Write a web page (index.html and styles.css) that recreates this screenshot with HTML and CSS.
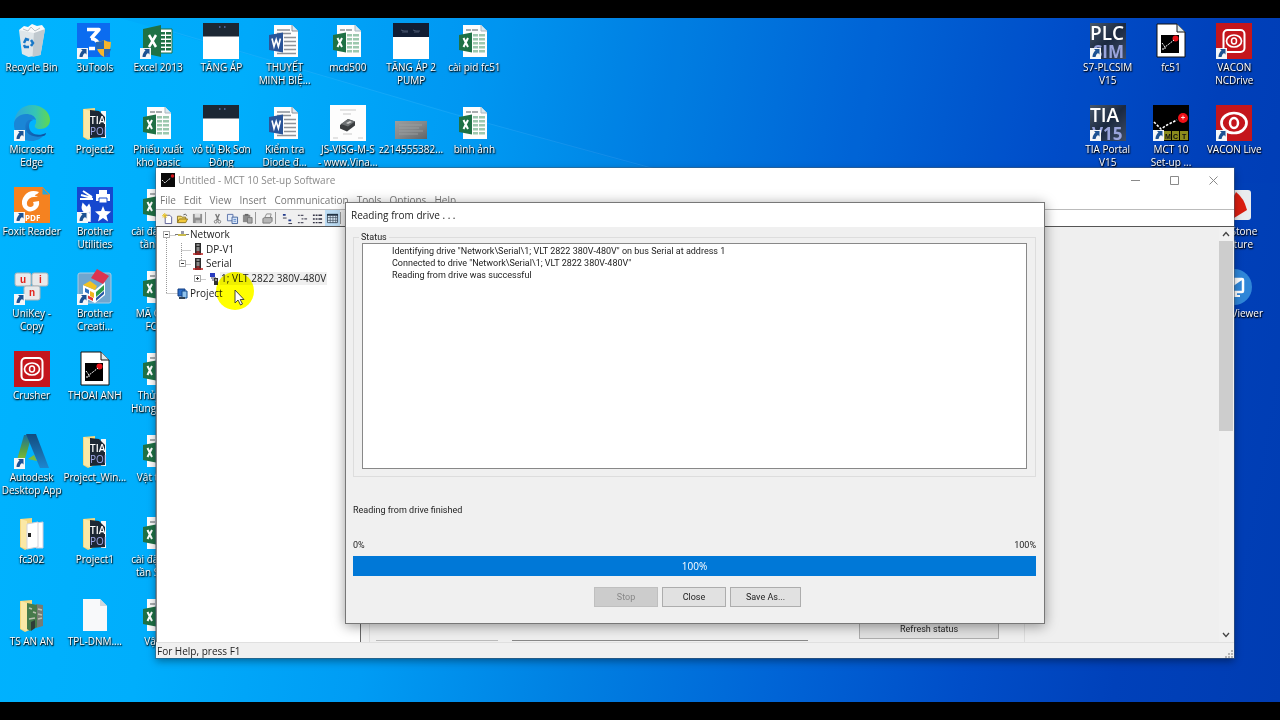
FILE: index.html
```html
<!DOCTYPE html>
<html lang="vi">
<head>
<meta charset="utf-8">
<title>Untitled - MCT 10 Set-up Software</title>
<link rel="stylesheet" href="styles.css">
</head>
<body>
<svg class="sprite" aria-hidden="true">
  <defs>
    <linearGradient id="gEdge" x1="0" y1="0" x2="1" y2="0"><stop offset="0" stop-color="#2aa6e0"/><stop offset=".6" stop-color="#35c5b4"/><stop offset="1" stop-color="#62d84e"/></linearGradient>
    <linearGradient id="gEdge2" x1="0" y1="0" x2="1" y2="1"><stop offset="0" stop-color="#1b7fd4"/><stop offset="1" stop-color="#0c4f9c"/></linearGradient>
    <linearGradient id="gTia" x1="0" y1="0" x2="1" y2="1"><stop offset="0" stop-color="#49586a"/><stop offset=".5" stop-color="#1b2940"/><stop offset="1" stop-color="#3f4d66"/></linearGradient>
    <linearGradient id="gAdA" x1="0" y1="0" x2="0" y2="1"><stop offset="0" stop-color="#1c6f9c"/><stop offset=".5" stop-color="#5aa343"/><stop offset="1" stop-color="#a2cf2e"/></linearGradient>
    <linearGradient id="gAdB" x1="0" y1="0" x2="0" y2="1"><stop offset="0" stop-color="#134c7e"/><stop offset="1" stop-color="#1d86cf"/></linearGradient>
    <linearGradient id="gMetal" x1="0" y1="0" x2="1" y2="1"><stop offset="0" stop-color="#9a9d9e"/><stop offset=".5" stop-color="#85888a"/><stop offset="1" stop-color="#606365"/></linearGradient>
  </defs>
  <symbol id="arrow" viewBox="0 0 36 36">
    <path d="M0 25h11v11H0z" fill="#f4f6f8"/><path d="M2.500 34q0-4 3-6.500l-1.500-1.500h5.500v5.500l-1.500-1.500q-2 1-2.500 4z" fill="#1d5293"/>
  </symbol>
  <symbol id="bin" viewBox="0 0 36 36">
    <path d="M5 7l26-1-4.500 26-12 2-6.500-3z" fill="#dfe6ea"/><path d="M20 9l11-3-4.500 26-8 2z" fill="#c0c9cf"/>
    <path d="M5 7l5-4 4 1 4-3 5 2 5-1 3 4-11 4z" fill="#f7f9fa"/><path d="M9 6l5 2 3-4 4 4 5-3" fill="none" stroke="#b7c0c6"/>
    <path d="M10 20l2-4 3 1M17 17l2 3-2 3M15 24h-4l-1-2" fill="none" stroke="#1878c8" stroke-width="2.500"/>
  </symbol>
  <symbol id="tools3u" viewBox="0 0 36 36">
    <path d="M0 0h33v34H0z" fill="#0b6cf0"/><path d="M10 6.500h12l-8 9" fill="none" stroke="#fff" stroke-width="3.500" stroke-linejoin="round"/><path d="M14 15.500q4 0 7 4M12 25.500h6" fill="none" stroke="#fff" stroke-width="3.500"/>
    <path d="M27 17q3 2 7 2 0 11-7 15-8-4-8-15 5 0 8-2z" fill="#f5b62c"/><path d="M27 17q-3 2-8 2v7h8zM27 26h7q-1 5-7 8z" fill="#2769b5"/>
  </symbol>
  <symbol id="excelapp" viewBox="0 0 36 36">
    <path d="M18 6h14v24H18z" fill="#fff" stroke="#1f7145"/><path d="M20 9h5v2.500h-5zm6 0h5v2.500h-5zM20 13h5v2.500h-5zm6 0h5v2.500h-5zM20 17h5v2.500h-5zm6 0h5v2.500h-5zM20 21h5v2.500h-5zm6 0h5v2.500h-5zM20 25h5v2.500h-5zm6 0h5v2.500h-5z" fill="#1f7145"/>
    <path d="M3 6l18-4v32L3 30z" fill="#1f7145"/><path d="M9 12l7 12M16 12L9 24" stroke="#fff" stroke-width="2.500"/>
  </symbol>
  <symbol id="xls" viewBox="0 0 36 36">
    <path d="M7 2h18l6 6v26H7z" fill="#fdfdfd"/><path d="M25 2v6h6" fill="#d8e6ee" stroke="#aab8bf"/>
    <path d="M10 6h5v2h-5zm6 0h6v2h-6z" fill="#a9aeb0"/><path d="M17 11h5v2.500h-5zm6 0h6v2.500h-6zM17 15h5v2.500h-5zm6 0h6v2.500h-6zM17 19h5v2.500h-5zm6 0h6v2.500h-6zM17 23h5v2.500h-5zm6 0h6v2.500h-6zM17 27h5v2.500h-5zm6 0h6v2.500h-6z" fill="#9cc8ae"/>
    <path d="M3 12l13-2.500v20L3 27z" fill="#1f7145"/><path d="M7.500 15l4.500 9M12 15l-4.500 9" stroke="#fff" stroke-width="2"/>
  </symbol>
  <symbol id="doc" viewBox="0 0 36 36">
    <path d="M7 2h18l6 6v26H7z" fill="#fdfdfd"/><path d="M25 2v6h6" fill="#e0e6ee" stroke="#8d9299"/>
    <path d="M10 7h13M10 10.500h14M17 14.500h12M17 18.500h12M17 22.500h12M17 26.500h12M10 30.500h19" stroke="#8d9299" stroke-width="1.300"/>
    <path d="M2 12l14-2.500v20L2 27z" fill="#2a5599"/><path d="M5 15.500l2 8 2.200-7 2.200 7 2-8" fill="none" stroke="#fff" stroke-width="1.600"/>
  </symbol>
  <symbol id="panelpic" viewBox="0 0 36 36"><path d="M0 0h36v36H0z" fill="#fff"/><path d="M0 0h36v13.500H0z" fill="#1c2734"/><path d="M16 4h1.500M21 4h1.500" stroke="#7a9cf0"/></symbol>
  <symbol id="pumppic" viewBox="0 0 36 36"><path d="M0 0h36v36H0z" fill="#fff"/><path d="M0 0h36v14H0z" fill="#111d34"/><path d="M8 7l3 1h4M20 7l3 1h4M9 9h6M21 9h5" fill="none" stroke="#54617a" stroke-width=".8"/></symbol>
  <symbol id="scan" viewBox="0 0 36 36"><path d="M0 0h36v36H0z" fill="#fdfdfd"/><path d="M10 5h16M13 9h8M13 29h9M3 33h5M28 33h5" stroke="#bbb" stroke-width=".8"/><path d="M10 20l8-6 7 2.500v4l-8 6-7-3z" fill="#3a3d3f"/><path d="M11 19l7-5 7 2.500-7 5z" fill="#6c7072"/><path d="M16 18l4-2 2 1-4 2z" fill="#ccc"/></symbol>
  <symbol id="plate" viewBox="0 0 36 36"><path d="M2 16h32v18H2z" fill="url(#gMetal)"/><path d="M6 20h23M6 23h20M6 26h24M6 29h19" stroke="#a0a3a4" stroke-width=".8"/></symbol>
  <symbol id="edge" viewBox="0 0 36 36">
    <path d="M0 18C1 6 9 0 18 0c10 0 18 7 18 15 0 6-5 9-10 9-4 0-6-2-5-4 3-4 0-10-7-10C7 10 1 13 0 18z" fill="url(#gEdge)"/>
    <path d="M0 18c1-5 6-9 12-9 5 0 9 2 10 6-6-2-10 3-9 8 1 6 8 10 18 6C27 34 22 36 18 36 8 36-1 29 0 18z" fill="#1a86d6"/>
    <path d="M12 18c-3 8 4 16 17 13 2 0 3-2 3-3-8 4-17 1-17-7 0-3 1-5 4-6-3-1-6 0-7 3z" fill="url(#gEdge2)"/>
  </symbol>
  <symbol id="folder" viewBox="0 0 36 36"><path d="M6 4l12-1v29l-7 3-5-3z" fill="#f4d77e"/><path d="M7 4l6 2v28l-6-2z" fill="#fbe8a6"/></symbol>
  <symbol id="tiafolder" viewBox="0 0 36 36"><use href="#folder"/><path d="M24 6h5v27h-5z" fill="#f6f6f6"/><path d="M13 5l9 1 6 6v20l-15 1z" fill="#1d2734"/></symbol>
  <symbol id="fcfolder" viewBox="0 0 36 36"><use href="#folder"/><path d="M22 8l7-1v26h-7z" fill="#fff" stroke="#ccd"/><path d="M13 9l11-2v25l-11 2z" fill="#fff" stroke="#d2d2d8"/><path d="M14 18h3v4h-3z" fill="#222"/></symbol>
  <symbol id="tsfolder" viewBox="0 0 36 36"><use href="#folder"/><path d="M22 7l7 1v21l-7 2z" fill="#777c74"/><path d="M13 6l10 2v22l-7 4-3-2z" fill="#467a4b"/><path d="M15 11l3 1M19 15l3 1M15 22l6-1M24 12l4 1M24 17l4 1M24 22l4-1" stroke="#b9c2b0" stroke-width="1.500"/><path d="M17 25l4-2v8l-4 3z" fill="#2f3d38"/></symbol>
  <symbol id="foxit" viewBox="0 0 36 36"><path d="M0 0h28l8 8v28H0z" fill="#f58220"/><path d="M28 0v8h8z" fill="#2ba6d8" stroke="#f58220"/><path d="M25 5q-9-3-14 3-5 6-2 12 5 7 12 3 5-3 4-9l-6 1q2 4-2 5-5 0-4-5 2-5 7-5 3 0 4-1-4 0-3-1 3-1 4-3z" fill="#fff"/></symbol>
  <symbol id="brother" viewBox="0 0 36 36"><path d="M0 0h36v36H0z" fill="#1648cf"/><path d="M3 12h13M4 8l11 3M6 4l9 6" stroke="#fff" stroke-width="2"/><path d="M22 3h8v4h-8zM19 7h14v7H19z" fill="#fff"/><path d="M22 11h8v5h-8z" fill="#fff" stroke="#1648cf"/><path d="M6 17l4 4 2-3q2 4-1 7l2 9h-3l-2-9q-4-2-2-8zM13 20v13" stroke="#fff" stroke-width="1.500" fill="#fff"/><path d="M26 19l2 5 6 .5-4.500 4 1.500 6-5-3.500-5 3.500 1.500-6-4.500-4 6-.5z" fill="#fff"/></symbol>
  <symbol id="unikey" viewBox="0 0 36 36"><g fill="#e8e9eb" stroke="#aeb3b7"><rect x="1" y="4" width="16" height="13" rx="2"/><rect x="18" y="4" width="16" height="13" rx="2"/><rect x="10" y="17" width="16" height="14" rx="2"/></g></symbol>
  <symbol id="creative" viewBox="0 0 36 36"><rect x="1" y="4" width="33" height="30" rx="2" fill="#6fa6cf" stroke="#a9cbe4"/><path d="M6 16l12 5v13L6 28z" fill="#fff"/><path d="M18 21l10-8v13l-10 8z" fill="#fff"/><path d="M8 19l4 2v4l-4-2z" fill="#2d6fc0"/><path d="M13 22l4 2v5l-4-2z" fill="#f0b51e"/><path d="M8 25l8 4v3l-8-4z" fill="#d33"/><path d="M19 23l8-7v5l-8 7z" fill="#2d9e48"/><path d="M19 29l8-7v3l-8 7z" fill="#2558a8"/><path d="M6 16l7-4 7 5-2 4z" fill="#f3c221"/><path d="M20 0l12 7-6 8-12-6z" fill="#dd3450"/></symbol>
  <symbol id="vacon" viewBox="0 0 36 36"><path d="M0 0h36v36H0z" fill="#c4161c"/><rect x="7.500" y="7" width="21" height="22" rx="4" fill="none" stroke="#fff" stroke-width="2"/><ellipse cx="18" cy="18" rx="7.500" ry="6" fill="none" stroke="#fff" stroke-width="1.700"/><ellipse cx="18" cy="18" rx="2.500" ry="3" fill="none" stroke="#fff" stroke-width="1.500"/></symbol>
  <symbol id="vaconlive" viewBox="0 0 36 36"><path d="M0 0h36v36H0z" fill="#c4161c"/><ellipse cx="18" cy="18" rx="12.500" ry="10" fill="none" stroke="#fff" stroke-width="2.700"/><ellipse cx="18" cy="18" rx="4" ry="5" fill="none" stroke="#fff" stroke-width="2.500"/></symbol>
  <symbol id="mctfile" viewBox="0 0 36 36"><path d="M4 1h20l8 8v25H4z" fill="#fff" stroke="#111"/><path d="M24 1v8h8" fill="#dce8ec" stroke="#111"/><path d="M8 12h18v18H8z" fill="#000"/><circle cx="22.500" cy="15.500" r="3" fill="#e8121a"/><path d="M9 20l3 4 4-3 5-4M12 24v3M9 26h2" fill="none" stroke="#fff" stroke-dasharray="2 1"/></symbol>
  <symbol id="mct" viewBox="0 0 36 36"><path d="M0 0h36v36H0z" fill="#000"/><circle cx="30" cy="13" r="5" fill="#f01018"/><path d="M30 10.500v4M28 12.500h4" stroke="#fff" stroke-width=".8"/><path d="M1 17l7 7 6-4 10-5" fill="none" stroke="#fff" stroke-width="1.600" stroke-dasharray="2.500 1.500"/><path d="M11 26h7v9h-7zM19 26h7v9h-7zM27 26h8v9h-8z" fill="#8b8b1c"/></symbol>
  <symbol id="autodesk" viewBox="0 0 36 36"><path d="M10 2h8l-8 27-9 5z" fill="url(#gAdA)"/><path d="M12 1h10l13 34H26z" fill="url(#gAdB)"/><path d="M14 26l6-4 3 6z" fill="#7dbb3c"/></symbol>
  <symbol id="blank" viewBox="0 0 36 36"><path d="M6 2h17l7 7v25H6z" fill="#f8f9fa"/><path d="M23 2v7h7z" fill="#cfd6dc"/></symbol>
  <symbol id="tiabg" viewBox="0 0 36 36"><path d="M0 0h36v36H0z" fill="url(#gTia)"/></symbol>
  <symbol id="faststone" viewBox="0 0 36 36"><rect x="1" y="3" width="34" height="30" rx="3" fill="#e9ecee"/><path d="M8 28L20 5q8 6 11 18l-13 8z" fill="#d91e10"/></symbol>
  <symbol id="teamviewer" viewBox="0 0 36 36"><circle cx="18" cy="18" r="18" fill="#2f86d8"/><rect x="8" y="10" width="19" height="13" rx="1" fill="none" stroke="#fff" stroke-width="2.500"/><path d="M10 22L26 11H10z" fill="#fff"/><path d="M16 24h5v3h-5z M14 26h10v2H14z" fill="#fff"/></symbol>
  <symbol id="drv" viewBox="0 0 14 12"><path d="M4 0h6v12H4z" fill="#2b2b2b"/><path d="M5.500 2h3M5.500 5h3M5.500 7h3" stroke="#e8e8e8"/><path d="M2 11h10" stroke="#b22" stroke-width="1.500"/><path d="M5.500 9h3" stroke="#d33"/></symbol>
</svg>

<main class="desktop">
  <svg class="beams" viewBox="0 0 1280 684" preserveAspectRatio="none" aria-hidden="true">
    <path d="M120 0L700 165H1280V0z" fill="#003cc8" opacity=".04"/>
    <path d="M160 10L450 95L670 155" fill="none" stroke="#8fd0ff" opacity=".13"/>
  </svg>

  <nav class="icons icons-left" aria-label="Desktop">
    <div class="col">
      <a class="tile" href="#"><svg><use href="#bin"/></svg><span>Recycle Bin</span></a>
      <a class="tile" href="#"><svg><use href="#edge"/><use href="#arrow"/></svg><span>Microsoft<br>Edge</span></a>
      <a class="tile" href="#"><svg><use href="#foxit"/><text class="pdf" x="11" y="34">PDF</text><use href="#arrow"/></svg><span>Foxit Reader</span></a>
      <a class="tile" href="#"><svg><use href="#unikey"/><g class="keys"><text x="6" y="14">u</text><text x="25" y="14">i</text><text x="15" y="27">n</text></g><use href="#arrow"/></svg><span>UniKey -<br>Copy</span></a>
      <a class="tile" href="#"><svg><use href="#vacon"/></svg><span>Crusher</span></a>
      <a class="tile" href="#"><svg><use href="#autodesk"/><use href="#arrow"/></svg><span>Autodesk<br>Desktop App</span></a>
      <a class="tile" href="#"><svg><use href="#fcfolder"/></svg><span>fc302</span></a>
      <a class="tile" href="#"><svg><use href="#tsfolder"/></svg><span>TS AN AN</span></a>
    </div>
    <div class="col">
      <a class="tile" href="#"><svg><use href="#tools3u"/><use href="#arrow"/></svg><span>3uTools</span></a>
      <a class="tile" href="#"><svg><use href="#tiafolder"/><text class="tf" x="13" y="19">TIA</text><text class="tf low" x="13" y="30">POI</text></svg><span>Project2</span></a>
      <a class="tile" href="#"><svg><use href="#brother"/><use href="#arrow"/></svg><span>Brother<br>Utilities</span></a>
      <a class="tile" href="#"><svg><use href="#creative"/><use href="#arrow"/></svg><span>Brother<br>Creati...</span></a>
      <a class="tile" href="#"><svg><use href="#mctfile"/></svg><span>THOAI ANH</span></a>
      <a class="tile" href="#"><svg><use href="#tiafolder"/><text class="tf" x="13" y="19">TIA</text><text class="tf low" x="13" y="30">POI</text></svg><span>Project_Win...</span></a>
      <a class="tile" href="#"><svg><use href="#tiafolder"/><text class="tf" x="13" y="19">TIA</text><text class="tf low" x="13" y="30">POI</text></svg><span>Project1</span></a>
      <a class="tile" href="#"><svg><use href="#blank"/></svg><span>TPL-DNM....</span></a>
    </div>
    <div class="col">
      <a class="tile" href="#"><svg><use href="#excelapp"/><use href="#arrow"/></svg><span>Excel 2013</span></a>
      <a class="tile" href="#"><svg><use href="#xls"/></svg><span>Phiếu xuất<br>kho basic</span></a>
      <a class="tile" href="#"><svg><use href="#xls"/></svg><span>cài đặt biến<br>tần số...</span></a>
      <a class="tile" href="#"><svg><use href="#xls"/></svg><span>MÃ CODE<br>FC 51</span></a>
      <a class="tile" href="#"><svg><use href="#xls"/></svg><span>Thủy Hải<br>Hùng Vươ...</span></a>
      <a class="tile" href="#"><svg><use href="#xls"/></svg><span>Vật tư A1</span></a>
      <a class="tile" href="#"><svg><use href="#xls"/></svg><span>cài đặt biến<br>tần SHZ...</span></a>
      <a class="tile" href="#"><svg><use href="#xls"/></svg><span>Vật tư</span></a>
    </div>
    <div class="col">
      <a class="tile" href="#"><svg><use href="#panelpic"/></svg><span>TĂNG ÁP</span></a>
      <a class="tile" href="#"><svg><use href="#panelpic"/></svg><span>vỏ tủ Đk Sơn<br>Đông</span></a>
    </div>
    <div class="col">
      <a class="tile" href="#"><svg><use href="#doc"/></svg><span>THUYẾT<br>MINH BIỆ...</span></a>
      <a class="tile" href="#"><svg><use href="#doc"/></svg><span>Kiểm tra<br>Diode đ...</span></a>
    </div>
    <div class="col">
      <a class="tile" href="#"><svg><use href="#xls"/></svg><span>mcd500</span></a>
      <a class="tile" href="#"><svg><use href="#scan"/></svg><span>JS-VISG-M-S<br>- www.Vina...</span></a>
    </div>
    <div class="col">
      <a class="tile" href="#"><svg><use href="#pumppic"/></svg><span>TĂNG ÁP 2<br>PUMP</span></a>
      <a class="tile" href="#"><svg><use href="#plate"/></svg><span>z214555382...</span></a>
    </div>
    <div class="col">
      <a class="tile" href="#"><svg><use href="#xls"/></svg><span>cài pid fc51</span></a>
      <a class="tile" href="#"><svg><use href="#xls"/></svg><span>bình ảnh</span></a>
    </div>
  </nav>

  <nav class="icons icons-right" aria-label="Desktop, right side">
    <div class="col">
      <a class="tile" href="#"><svg><use href="#tiabg"/><text class="big" x="0" y="17">PLC</text><text class="big low" x="3" y="35">SIM</text><use href="#arrow"/></svg><span>S7-PLCSIM<br>V15</span></a>
      <a class="tile" href="#"><svg><use href="#tiabg"/><text class="big" x="0" y="17">TIA</text><text class="big low" x="2" y="35">V15</text><use href="#arrow"/></svg><span>TIA Portal<br>V15</span></a>
    </div>
    <div class="col">
      <a class="tile" href="#"><svg><use href="#mctfile"/></svg><span>fc51</span></a>
      <a class="tile" href="#"><svg><use href="#mct"/><text class="tiles" x="12" y="34">M</text><text class="tiles" x="20" y="34">C</text><text class="tiles" x="29" y="34">T</text><use href="#arrow"/></svg><span>MCT 10<br>Set-up ...</span></a>
    </div>
    <div class="col">
      <a class="tile" href="#"><svg><use href="#vacon"/><use href="#arrow"/></svg><span>VACON<br>NCDrive</span></a>
      <a class="tile" href="#"><svg><use href="#vaconlive"/><use href="#arrow"/></svg><span>VACON Live</span></a>
      <a class="tile" href="#"><svg><use href="#faststone"/></svg><span>FastStone<br>Capture</span></a>
      <a class="tile" href="#"><svg><use href="#teamviewer"/></svg><span>TeamViewer</span></a>
    </div>
  </nav>

  <section class="window">
    <header class="titlebar">
      <svg class="app-icon" viewBox="0 0 14 14"><path d="M0 0h14v14H0z" fill="#0a0a0a"/><circle cx="11.500" cy="3" r="1.800" fill="#d4141c"/><path d="M1 7l3 3 3-3 3-2" fill="none" stroke="#eee" stroke-dasharray="2 1"/></svg>
      <h1>Untitled - MCT 10 Set-up Software</h1>
      <button type="button" class="caption" aria-label="Minimize"><svg viewBox="0 0 9 9"><path d="M0 4.500h9"/></svg></button>
      <button type="button" class="caption" aria-label="Maximize"><svg viewBox="0 0 9 9"><path d="M.5.500h8v8h-8z"/></svg></button>
      <button type="button" class="caption" aria-label="Close window"><svg viewBox="0 0 9 9"><path d="M.5.500l8 8M8.500.500l-8 8"/></svg></button>
    </header>
    <div class="menubar">
      <button type="button">File</button><button type="button">Edit</button><button type="button">View</button><button type="button">Insert</button><button type="button">Communication</button><button type="button">Tools</button><button type="button">Options</button><button type="button">Help</button>
    </div>
    <div class="toolbar">
      <div class="toolgroup">
        <button type="button" aria-label="New"><svg viewBox="0 0 12 12"><path d="M3.500 2.500h5l2 2v7h-7z" fill="#fff" stroke="#555a90"/><path d="M3 0v6M0 3h6M1 1l4 4M5 1L1 5" stroke="#e8c21a"/></svg></button>
        <button type="button" aria-label="Open"><svg viewBox="0 0 12 12"><path d="M.5 10.500v-7h4l1 1h4v2" fill="#f6dc6a" stroke="#8c7420"/><path d="M.5 10.500l2-4h9l-2 4z" fill="#f3c93a" stroke="#8c7420"/><path d="M7 2q2-2 4 1" fill="none" stroke="#555"/></svg></button>
        <button type="button" aria-label="Save"><svg viewBox="0 0 12 12"><path d="M1 1h10v10H1z" fill="#8f8f8f"/><path d="M3 1h6v4H3z" fill="#ddd"/><path d="M4 8h5v3H4z" fill="#bbb"/></svg></button>
        <i></i>
        <button type="button" aria-label="Cut"><svg viewBox="0 0 12 12"><path d="M4 1l3 7M8 1L5 8" stroke="#777" stroke-width="1.500"/><circle cx="4" cy="9.500" r="1.500" fill="none" stroke="#777"/><circle cx="8" cy="9.500" r="1.500" fill="none" stroke="#777"/></svg></button>
        <button type="button" aria-label="Copy"><svg viewBox="0 0 12 12"><path d="M.5 1.500h6v7h-6z" fill="#e4ecf8" stroke="#5870a8"/><path d="M5.500 4.500h6v7h-6z" fill="#dbe8fa" stroke="#44649c"/><path d="M7 7h3M7 9h3" stroke="#5a86c8"/></svg></button>
        <button type="button" aria-label="Paste"><svg viewBox="0 0 12 12"><path d="M1 2h8v8H1z" fill="#8a8a8a"/><path d="M3 1h4v2H3z" fill="#666"/><path d="M6 5h5v6H6z" fill="#aaa" stroke="#777"/></svg></button>
        <i></i>
        <button type="button" aria-label="Print"><svg viewBox="0 0 12 12"><path d="M3 5l2-4h5L9 5" fill="#eee" stroke="#888"/><path d="M1 6l2-1h8v4l-2 2H1z" fill="#b5b5b5" stroke="#777"/></svg></button>
        <i></i>
        <button type="button" aria-label="Large icons"><svg viewBox="0 0 12 12"><path d="M2.500 1v2M8.500 7v2" stroke="#223a8c" stroke-width="3"/><path d="M1 5.500h4M7 11.500h4" stroke="#334"/></svg></button>
        <button type="button" aria-label="Small icons"><svg viewBox="0 0 12 12"><path d="M1 2.500h2M4 2.500h3M5 6.500h2M8 6.500h3M1 10.500h2M4 10.500h3" stroke="#556" stroke-width="1.300"/></svg></button>
        <button type="button" aria-label="List"><svg viewBox="0 0 12 12"><path d="M1 2.500h2M4 2.500h2M7 2.500h4M1 6.500h2M4 6.500h2M7 6.500h4M1 10.500h2M4 10.500h2M7 10.500h4" stroke="#334" stroke-width="1.500"/></svg></button>
        <button type="button" class="pressed" aria-label="Details"><svg viewBox="0 0 12 12"><path d="M.5 1.500h11v9H.5z" fill="#dcecfa" stroke="#456"/><path d="M0 2h12" stroke="#234" stroke-width="2"/><path d="M0 5h12M0 8h12M3.500 2v9M6.500 2v9M9.500 2v9" stroke="#456" stroke-width=".8"/></svg></button>
        <i></i>
      </div>
    </div>
    <div class="workarea">
      <div class="tree">
        <svg class="tree-lines" viewBox="0 0 60 73" aria-hidden="true"><path d="M9.500 10v55M9.500 7.500h9M9.500 65.500h12M24.500 15v22M24.500 22.500h9M24.500 36.500h9M39.500 51.500h9"/></svg>
        <ul>
          <li class="l1"><button type="button" aria-label="Collapse Network"><svg viewBox="0 0 7 7"><path d="M2 3.500h3"/></svg></button><svg viewBox="0 0 14 12"><path d="M0 6.500h14" stroke="#777"/><path d="M3 6h8v2H3z" fill="#c7b94d"/><path d="M6 3h3v3H6z" fill="#99a"/></svg><span>Network</span></li>
          <li class="l2"><b></b><svg viewBox="0 0 14 12"><use href="#drv"/></svg><span>DP-V1</span></li>
          <li class="l2"><button type="button" aria-label="Collapse Serial"><svg viewBox="0 0 7 7"><path d="M2 3.500h3"/></svg></button><svg viewBox="0 0 14 12"><use href="#drv"/></svg><span>Serial</span></li>
          <li class="l3"><button type="button" aria-label="Expand drive 1"><svg viewBox="0 0 7 7"><path d="M2 3.500h3M3.500 2v3"/></svg></button><svg viewBox="0 0 14 12"><path d="M4 0h5v4H4z" fill="#2a3cc0"/><path d="M5 5h5M6 7h3" stroke="#446"/><path d="M8 5h4v7H8z" fill="#333"/><path d="M9 7h2" stroke="#eee"/></svg><span class="selected">1; VLT 2822 380V-480V</span></li>
          <li class="l1"><b></b><svg viewBox="0 0 14 12"><path d="M3 1h7v7H3z" fill="#2a6cc8" stroke="#123c80"/><path d="M7 3h5v7H7z" fill="#8fc3ee" stroke="#124a8c"/><path d="M4 9h6v2H4z" fill="#345"/></svg><span>Project</span></li>
        </ul>
      </div>
      <div class="pane">
        <div class="sheet">
          <div class="field light"></div>
          <div class="field dark"></div>
          <button type="button" class="btn refresh">Refresh status</button>
        </div>
        <div class="scroll">
          <button type="button" aria-label="Scroll up"><svg viewBox="0 0 8 6"><path d="M1 5l3-3.500L7 5"/></svg></button>
          <div class="thumb"></div>
          <button type="button" aria-label="Scroll down"><svg viewBox="0 0 8 6"><path d="M1 1l3 3.500L7 1"/></svg></button>
        </div>
      </div>
    </div>
    <footer class="status"><span>For Help, press F1</span><svg viewBox="0 0 8 8"><path d="M6 0h2v2H6zM3 3h2v2H3zM6 3h2v2H6zM0 6h2v2H0zM3 6h2v2H3zM6 6h2v2H6z" fill="#b4b4b4"/></svg></footer>
  </section>

  <section class="dialog" role="dialog" aria-labelledby="dlg-title">
    <h2 id="dlg-title">Reading from drive . . .</h2>
    <div class="dialog-body">
      <fieldset>
        <legend>Status</legend>
        <ul class="log">
          <li>Identifying drive "Network\Serial\1; VLT 2822 380V-480V" on bus Serial at address 1</li>
          <li>Connected to drive "Network\Serial\1; VLT 2822 380V-480V"</li>
          <li>Reading from drive was successful</li>
        </ul>
      </fieldset>
      <p class="result">Reading from drive finished</p>
      <div class="scale"><span>0%</span><span>100%</span></div>
      <div class="progress" role="progressbar" aria-valuenow="100"><div class="bar" style="width:100%">100%</div></div>
      <div class="actions">
        <button type="button" class="btn" disabled>Stop</button>
        <button type="button" class="btn">Close</button>
        <button type="button" class="btn wide">Save As...</button>
      </div>
    </div>
  </section>

  <div class="pointer-glow"></div>
  <svg class="pointer" viewBox="0 0 11 17" aria-hidden="true"><path d="M1 1v13l3-3 2.500 5 2-1-2.300-4.500H10z" fill="#fff" stroke="#333" stroke-width=".9"/></svg>
</main>
</body>
</html>
```

FILE: styles.css
```css
* { box-sizing: border-box; }

body {
  margin: 0;
  min-height: 100vh;
  padding: 18px 0;
  background: #000;
  font-family: "Open Sans", "Noto Sans", sans-serif;
  font-size: 10px;
  line-height: 13px;
  color: #222;
  display: flex;
  overflow: hidden;
}
h1, h2, p, ul { margin: 0; padding: 0; font: inherit; list-style: none; }
button { font: inherit; color: inherit; margin: 0; padding: 0; border: 0; background: none; }
svg { display: block; overflow: visible; }
.sprite { position: absolute; width: 0; height: 0; }

.desktop {
  position: relative;
  flex: 1;
  overflow: hidden;
  background:
    linear-gradient(100deg, #00b4ff 0%, #00aefc 18%, #009cf4 34%, #0080e2 49%, #0064d6 64%, #004ec8 77%, #0041ba 88%, #003cb2 100%);
}
.beams { position: absolute; inset: 0; width: 100%; height: 100%; }

/* Desktop shortcuts */
.icons { position: absolute; top: 0; display: flex; }
.icons-left { left: 0; width: 506px; }
.icons-right { right: 14px; width: 190px; }
.col { flex: 1 1 0; min-width: 0; }
.tile {
  height: 82px;
  padding-top: 5px;
  display: flex;
  flex-direction: column;
  align-items: center;
  gap: 2px;
  color: #fff;
  text-decoration: none;
  text-align: center;
  white-space: nowrap;
}
.tile span { text-shadow: 0 1px 2px #000, 1px 1px 1px rgba(0, 0, 0, .8); }
.tile svg { flex: none; width: 36px; height: 36px; }
.pdf { font-size: 8px; font-weight: 700; fill: #fff; }
.keys { font: 700 10px "Liberation Sans", sans-serif; fill: #e2231a; }
.tf { font-size: 10px; font-weight: 600; fill: #fff; }
.tf.low { font-weight: 400; fill: #a0a6e8; }
.big { font-size: 19px; font-weight: 600; fill: #fff; }
.big.low { font-size: 17px; font-weight: 700; fill: #9aa4dc; }
.tiles { font: 700 7px "Liberation Sans", sans-serif; fill: #111; }

/* Application window */
.window {
  position: absolute;
  inset: 150px 46px 44px 156px;
  display: flex;
  flex-direction: column;
  background: #fff;
  box-shadow: 0 0 0 1px rgba(70, 90, 110, .5), 0 3px 8px rgba(0, 0, 0, .4);
}
.titlebar { display: flex; align-items: center; height: 24px; padding: 0 1px 0 5px; color: #8a8a8a; }
.app-icon { width: 14px; height: 14px; margin-right: 3px; }
.titlebar h1 { flex: 1; }
.caption { width: 39px; height: 24px; display: grid; place-items: center; }
.caption svg { width: 9px; height: 9px; fill: none; stroke: #8a8a8a; }
.menubar { display: flex; align-items: center; gap: 8px; height: 17px; padding-left: 4px; color: #777; }
.toolbar { height: 18px; border-top: 1px solid #bbb; border-bottom: 1px solid #555; }
.toolgroup { display: flex; align-items: center; height: 16px; width: 200px; padding-left: 4px; background: #f0f0f0; }
.toolgroup button { width: 15px; height: 16px; flex: none; display: grid; place-items: center; }
.toolgroup svg { width: 11px; height: 11px; }
.toolgroup i { width: 5px; height: 12px; flex: none; border-left: 1px solid #999; }
.toolgroup .pressed { background: #bcdcf4; }

.workarea { flex: 1; min-height: 0; display: flex; }
.tree { position: relative; width: 205px; border-left: 1px solid #888; border-right: 1px solid #666; }
.tree-lines { position: absolute; left: 0; top: 1px; width: 60px; height: 73px; fill: none; stroke: #999; stroke-dasharray: 1 1; }
.tree ul { position: relative; display: grid; grid-auto-rows: 1fr; height: 74px; }
.tree li { display: flex; align-items: center; }
.tree li > svg { width: 14px; height: 12px; }
.tree li span { padding: 0 1px; }
.tree button { width: 7px; height: 7px; margin-right: 5px; background: #fff; outline: 1px solid #aaa; outline-offset: -1px; }
.tree button svg { width: 7px; height: 7px; stroke: #333; }
.tree b { width: 7px; margin-right: 5px; }
.l1 { padding-left: 6px; }
.l2 { padding-left: 22px; }
.l3 { padding-left: 37px; }
.tree .selected { background: #efefef; }

.pane { flex: 1; display: flex; background: #efefef; }
.sheet {
  flex: 1;
  display: flex;
  align-items: flex-end;
  margin: 0 194px 0 8px;
  padding: 0 25px 0 6px;
  border: solid #ddd;
  border-width: 0 1px;
}
.field { height: 2px; border-top: 1px solid #bbb; }
.field.light { flex: 122; margin-right: 14px; }
.field.dark { flex: 296; margin-right: 51px; border-color: #888; }
.scroll { width: 14px; display: flex; flex-direction: column; margin-right: 1px; background: #f1f1f1; }
.scroll button { height: 14px; display: grid; place-items: center; }
.scroll svg { width: 8px; height: 6px; fill: none; stroke: #444; stroke-width: 1.300; }
.thumb { height: 190px; background: #cdcdcd; margin-bottom: auto; }
.status { height: 16px; display: flex; justify-content: space-between; align-items: flex-end; padding: 0 1px; background: #f0f0f0; border-top: 1px solid #e0e0e0; }
.status svg { width: 8px; height: 8px; }

/* Progress dialog */
.dialog {
  position: absolute;
  inset: 184px 235px 78px 345px;
  display: flex;
  flex-direction: column;
  background: #f0f0f0;
  border: 1px solid #777;
  box-shadow: 0 2px 12px rgba(0, 0, 0, .4);
}
.dialog h2 { height: 24px; padding-left: 5px; line-height: 24px; background: #fff; }
.dialog-body, .refresh { font-family: Roboto, "Liberation Sans", sans-serif; font-size: 9px; line-height: 12px; }
.dialog-body { flex: 1; display: flex; flex-direction: column; padding: 4px 8px 16px 7px; }
fieldset { flex: 1; min-width: 0; display: flex; flex-direction: column; margin: 0; padding: 0 8px 7px; border: 1px solid #ddd; }
legend { margin-left: -3px; padding: 0 2px; }
.log { flex: 1; padding: 1px 29px; background: #fff; border: 1px solid #888; }
.result { margin-top: 27px; }
.scale { display: flex; justify-content: space-between; margin: 23px 0 5px; }
.bar { height: 20px; background: #0078d7; color: #fff; text-align: center; font: 10px/20px "Open Sans", sans-serif; }
.actions { display: flex; justify-content: center; gap: 4px; margin-top: 11px; padding-left: 6px; }
.btn { width: 64px; height: 20px; background: #e1e1e1; border: 1px solid #adadad; }
.btn.wide { width: 71px; }
.btn:disabled { background: #ccc; color: #888; border-color: #bfbfbf; }
.refresh { width: 140px; margin-bottom: 3px; }

.pointer-glow { position: absolute; left: 216px; top: 254px; width: 38px; height: 38px; border-radius: 50%; background: #ff0; mix-blend-mode: multiply; }
.pointer { position: absolute; left: 234px; top: 271px; width: 11px; height: 17px; }
```
